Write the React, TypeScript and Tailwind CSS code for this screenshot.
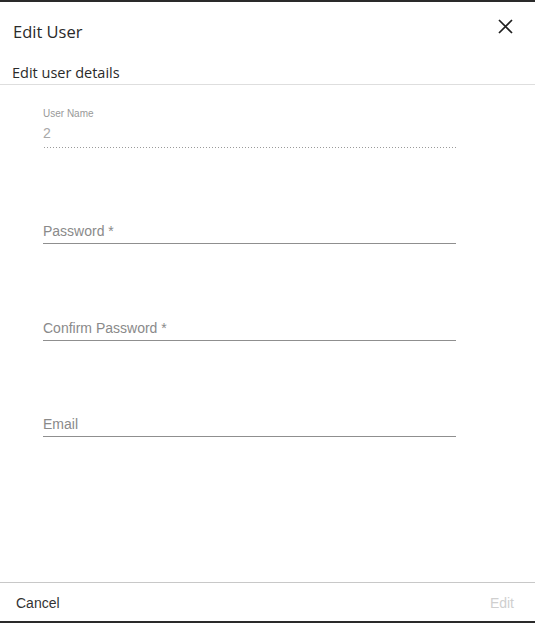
import React from "react";

function Field({ label, mt }: { label: string; mt: string }) {
  return (
    <div className={`${mt} h-[22px] border-b border-[#8f8f8f]`}>
      <div className="text-[14px] leading-[18px] text-[#8a8a8a]" style={{ fontFamily: '"Liberation Sans", Arial, sans-serif' }}>
        {label}
      </div>
    </div>
  );
}

export default function App() {
  return (
    <div className="w-[535px] h-[623px] flex flex-col bg-white border-t-2 border-b-2 border-[#2a2a2a]">
      <div className="h-[60px] flex justify-between items-start px-[13px]">
        <div className="mt-[18px] text-[16.5px] leading-[24px] text-[#2a2a2a]" style={{ fontFamily: '"Open Sans", "Noto Sans", sans-serif' }}>
          Edit User
        </div>
        <button className="mt-[16px] mr-[9px] w-[16px] h-[16px] flex items-center justify-center">
          <svg width="15" height="15" viewBox="0 0 15 15">
            <path d="M1 1 L14 14 M14 1 L1 14" stroke="#1f1f1f" strokeWidth="1.7" />
          </svg>
        </button>
      </div>
      <div className="h-[23px] border-b border-[#dedede] px-[12px] text-[14.5px] leading-[22px] text-[#2a2a2a]" style={{ fontFamily: '"Open Sans", "Noto Sans", sans-serif' }}>
        Edit user details
      </div>
      <div className="flex-1 px-[43px] pr-[79px]" style={{ fontFamily: '"Liberation Sans", Arial, sans-serif' }}>
        <div className="mt-[23px] h-[40px] bg-[linear-gradient(to_right,#9a9a9a_1px,transparent_1px)] bg-[length:3px_1px] bg-repeat-x bg-bottom">
          <div className="text-[10px] leading-[12px] text-[#999]">User Name</div>
          <div className="mt-[4px] text-[14px] leading-[18px] text-[#a8a8a8]">2</div>
        </div>
        <Field label="Password *" mt="mt-[74px]" />
        <Field label="Confirm Password *" mt="mt-[75px]" />
        <Field label="Email" mt="mt-[74px]" />
      </div>
      <div className="h-[39px] border-t border-[#c8c8c8] flex items-center justify-between px-[16px] pr-[21px] text-[14px] pt-[2px]" style={{ fontFamily: '"Liberation Sans", Arial, sans-serif' }}>
        <button className="text-[#333]">Cancel</button>
        <button className="text-[#cfcfcf]">Edit</button>
      </div>
    </div>
  );
}
